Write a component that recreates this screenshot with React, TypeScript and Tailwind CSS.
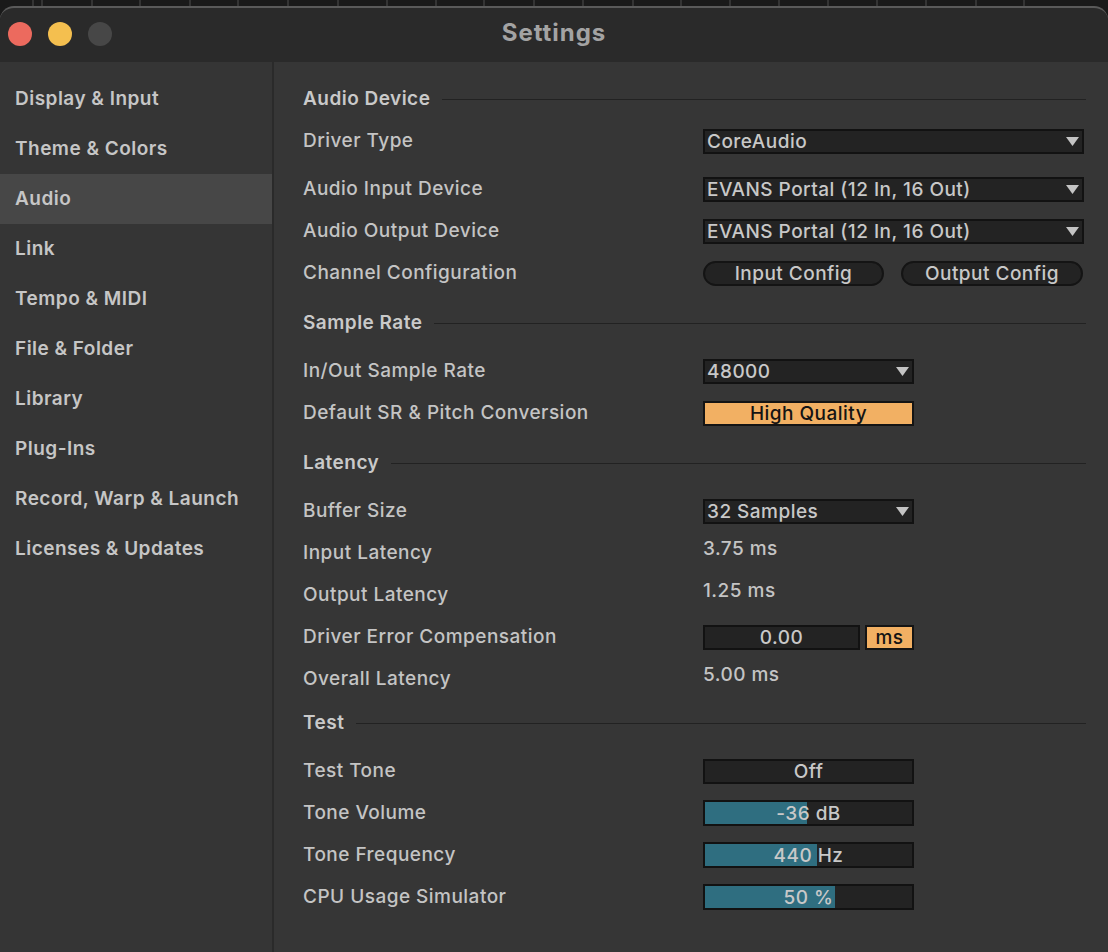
import React from "react";

const stripMarks = [32, 41, 91, 139, 189, 237, 287, 337, 386, 435, 483, 533, 582, 632, 680, 729, 778, 827, 876, 925, 975, 1023, 1073];

const navItems = [
  "Display & Input",
  "Theme & Colors",
  "Audio",
  "Link",
  "Tempo & MIDI",
  "File & Folder",
  "Library",
  "Plug-Ins",
  "Record, Warp & Launch",
  "Licenses & Updates",
];

function Caret() {
  return (
    <svg width="13" height="9" viewBox="0 0 13 9" className="shrink-0">
      <path d="M0 0 H13 L6.5 9 Z" fill="#c4c4c4" />
    </svg>
  );
}

function Header({ title, className = "" }: { title: string; className?: string }) {
  return (
    <div className={`flex h-[42px] items-center gap-3 ${className}`}>
      <span className="font-semibold text-[#c9c9c9]">{title}</span>
      <div className="h-px flex-1 bg-[#222222]" />
    </div>
  );
}

function Row({ label, children, className = "" }: { label: string; children?: React.ReactNode; className?: string }) {
  return (
    <div className={`grid h-[42px] grid-cols-[400px_1fr] items-center ${className}`}>
      <span className="font-medium text-[#c4c4c4]">{label}</span>
      <div className="flex items-center">{children}</div>
    </div>
  );
}

function Select({ value, wide }: { value: string; wide?: boolean }) {
  return (
    <div
      className={`flex h-[25px] items-center justify-between border-2 border-[#121212] bg-[#232323] pl-[2px] pr-[3px] font-medium text-[#c8c8c8] ${
        wide ? "w-[381px]" : "w-[211px]"
      }`}
    >
      <span className="leading-none">{value}</span>
      <Caret />
    </div>
  );
}

function Slider({ fill, value, unit }: { fill: number; value: string; unit: string }) {
  return (
    <div className="relative h-[26px] w-[211px] border-2 border-[#121212] bg-[#232323]">
      <div className="absolute inset-y-0 left-0 bg-[#2f6e80]" style={{ width: fill }} />
      <div className="relative flex h-full items-center justify-center font-medium leading-none text-[#c8c8c8]">
        {value}&nbsp;{unit}
      </div>
    </div>
  );
}

export default function App() {
  return (
    <div
      className="h-[952px] w-[1108px] overflow-hidden bg-[#1a1a1a] text-[19px] tracking-[0.025em]"
      style={{ fontFamily: "Inter, 'Open Sans', sans-serif" }}
    >
      {/* what sits behind the window */}
      <div className="flex h-[6px]">
        <div className="w-[32px]" />
        {stripMarks.slice(1).map((x, i) => (
          <div key={x} className="border-l-2 border-[#343434]" style={{ width: x - stripMarks[i] }} />
        ))}
      </div>

      <div className="flex h-[946px] flex-col overflow-hidden rounded-t-[14px] border-t-2 border-[#5a5a5a] bg-[#2a2a2a]">
        {/* Title bar */}
        <div className="relative flex h-[54px] shrink-0 items-center justify-center">
          <div className="absolute left-[8px] top-[14px] flex gap-4">
            <span className="h-[24px] w-[24px] rounded-full bg-[#ec6a5e]" />
            <span className="h-[24px] w-[24px] rounded-full bg-[#f4bf4f]" />
            <span className="h-[24px] w-[24px] rounded-full bg-[#474747]" />
          </div>
          <span className="pb-[4px] text-[24px] font-bold tracking-[0.04em] text-[#a3a3a3]">Settings</span>
        </div>

        <div className="flex flex-1">
          {/* Sidebar */}
          <nav className="w-[272px] shrink-0 bg-[#353535] pt-[12px]">
            {navItems.map((item) => (
              <div
                key={item}
                className={`flex h-[50px] items-center pl-[15px] font-semibold text-[#c6c6c6] ${
                  item === "Audio" ? "bg-[#474747]" : ""
                }`}
              >
                {item}
              </div>
            ))}
          </nav>
          <div className="w-[2px] bg-[#2a2a2a]" />

          {/* Content */}
          <main className="flex-1 bg-[#363636] pl-[29px] pr-[22px] pt-[16px]">
            <Header title="Audio Device" />
            <Row label="Driver Type">
              <Select value="CoreAudio" wide />
            </Row>
            <Row label="Audio Input Device" className="mt-[6px]">
              <Select value="EVANS Portal (12 In, 16 Out)" wide />
            </Row>
            <Row label="Audio Output Device">
              <Select value="EVANS Portal (12 In, 16 Out)" wide />
            </Row>
            <Row label="Channel Configuration">
              <div className="flex gap-[17px]">
                <button className="h-[25px] w-[181px] rounded-full border-2 border-[#141414] bg-[#232323] font-medium leading-none text-[#c8c8c8]">
                  Input Config
                </button>
                <button className="h-[25px] w-[182px] rounded-full border-2 border-[#141414] bg-[#232323] font-medium leading-none text-[#c8c8c8]">
                  Output Config
                </button>
              </div>
            </Row>

            <Header title="Sample Rate" className="mt-[8px]" />
            <Row label="In/Out Sample Rate" className="mt-[6px]">
              <Select value="48000" />
            </Row>
            <Row label="Default SR & Pitch Conversion">
              <div className="flex h-[25px] w-[211px] items-center justify-center border-2 border-[#141414] bg-[#f2b063] font-medium leading-none text-[#141414]">
                High Quality
              </div>
            </Row>

            <Header title="Latency" className="mt-[8px]" />
            <Row label="Buffer Size" className="mt-[6px]">
              <Select value="32 Samples" />
            </Row>
            <Row label="Input Latency">
              <span className="pb-[8px] font-medium text-[#c4c4c4]">3.75 ms</span>
            </Row>
            <Row label="Output Latency">
              <span className="pb-[8px] font-medium text-[#c4c4c4]">1.25 ms</span>
            </Row>
            <Row label="Driver Error Compensation">
              <div className="flex gap-[5px]">
                <div className="flex h-[25px] w-[157px] items-center justify-center border-2 border-[#121212] bg-[#232323] font-medium leading-none text-[#c8c8c8]">
                  0.00
                </div>
                <div className="flex h-[25px] w-[49px] items-center justify-center border-2 border-[#141414] bg-[#f2b063] font-medium leading-none text-[#141414]">
                  ms
                </div>
              </div>
            </Row>
            <Row label="Overall Latency">
              <span className="pb-[8px] font-medium text-[#c4c4c4]">5.00 ms</span>
            </Row>

            <Header title="Test" className="mt-[2px]" />
            <Row label="Test Tone" className="mt-[6px]">
              <div className="flex h-[25px] w-[211px] items-center justify-center border-2 border-[#121212] bg-[#232323] font-medium leading-none text-[#c8c8c8]">
                Off
              </div>
            </Row>
            <Row label="Tone Volume">
              <Slider fill={102} value="-36" unit="dB" />
            </Row>
            <Row label="Tone Frequency">
              <Slider fill={112} value="440" unit="Hz" />
            </Row>
            <Row label="CPU Usage Simulator">
              <Slider fill={130} value="50" unit="%" />
            </Row>
          </main>
        </div>
      </div>
    </div>
  );
}
